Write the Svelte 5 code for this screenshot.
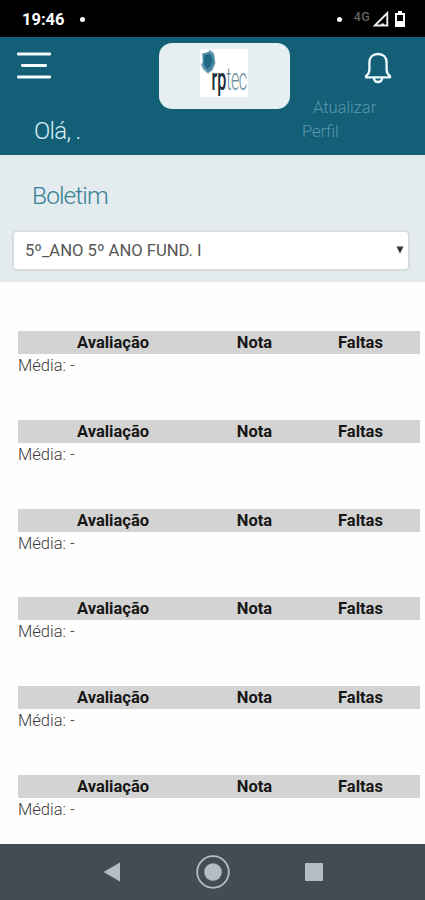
<script lang="ts">
  let turma = '5º_ANO 5º ANO FUND. I';

  const boletins = Array.from({ length: 6 }, (_, id) => ({ id, media: '-' }));
</script>

<div class="screen">
  <div class="status">
    <span class="time">19:46</span>
    <span class="dot"></span>
    <span class="dot right"></span>
    <span class="network">4G</span>
    <svg class="signal" width="16" height="16" viewBox="0 0 16 16">
      <path d="M1.8 14.500H14.300V2z" fill="none" stroke="#eee" stroke-width="1.9" />
      <path d="M8 15V12.500h3V15z" fill="#eee" />
    </svg>
    <svg width="10" height="16" viewBox="0 0 10 16">
      <path d="M3 0h4v2h3v14H0V2h3z" fill="#fff" />
      <path d="M2 4h6v6H2z" fill="#000" />
    </svg>
  </div>

  <header>
    <div class="left">
      <svg class="menu" width="34" height="28" viewBox="0 0 34 28">
        <path d="M1.3 2h31.4M5.3 13.5h23.4M1.3 25h31.4" fill="none" stroke="#f3fbfe" stroke-width="2.8" stroke-linecap="round" />
      </svg>
      <p class="greeting">Olá, .</p>
    </div>

    <div class="logo">
      <svg width="48" height="48" viewBox="0 0 48 48">
        <rect width="48" height="48" fill="#fff" />
        <path d="M2 4h6l2-3.500L14 4l1.500 10-3 7-4.500 4-4.500-4L.7 16 2.500 13z" fill="#86b0c1" />
        <path d="M3 5l6-2.500 4.500 3L15 14l-3 7-4 2.500L3 18z" fill="#4a8aa2" />
        <path d="M4.500 6.500L10 5l3 6-2.500 6.500L7 20l-3-5z" fill="#206783" />
        <text class="brand" transform="translate(11.500 40.500) scale(.52 1)"><tspan class="rp">rp</tspan><tspan class="tec">tec</tspan></text>
      </svg>
    </div>

    <div class="right-side">
      <svg class="bell" width="28" height="32" viewBox="0 0 28 32" fill="none" stroke="#edf9fd" stroke-width="2.300" stroke-linejoin="round">
        <path d="M14 2C8.500 2 5.400 5.500 5.400 10.500V17.500C5.400 20.500 4.200 22.500 2 24V25.400H26V24C23.800 22.500 22.600 20.500 22.600 17.500V10.500C22.600 5.500 19.500 2 14 2z" />
        <path d="M9.700 25.500c.4 3 2 4.500 4.300 4.500s3.900-1.500 4.300-4.500" />
      </svg>
      <a class="profile" href="#perfil">Atualizar Perfil</a>
    </div>
  </header>

  <section class="filter">
    <h1>Boletim</h1>
    <button class="select">
      <span>{turma}</span>
      <svg width="8" height="8" viewBox="0 0 8 8">
        <path d="M.5.5h7L4 7.600z" fill="#333" />
      </svg>
    </button>
  </section>

  <main>
    {#each boletins as boletim (boletim.id)}
      <div class="boletim">
        <div class="columns">
          <span>Avaliação</span>
          <span>Nota</span>
          <span>Faltas</span>
        </div>
        <p>Média: {boletim.media}</p>
      </div>
    {/each}
  </main>

  <nav>
    <svg width="18" height="20" viewBox="0 0 18 20">
      <path d="M.5 10L17 .5v19z" fill="#b4bec2" />
    </svg>
    <svg width="34" height="34" viewBox="0 0 34 34">
      <circle cx="17" cy="17" r="15.800" fill="none" stroke="#b4bec2" stroke-width="1.800" />
      <circle cx="17" cy="17" r="8.800" fill="#b4bec2" />
    </svg>
    <svg width="18" height="18" viewBox="0 0 18 18">
      <rect width="18" height="18" rx="1" fill="#b4bec2" />
    </svg>
  </nav>
</div>

<style>
  :global(body) {
    margin: 0;
  }

  .screen {
    width: 425px;
    height: 900px;
    display: flex;
    flex-direction: column;
    overflow: hidden;
    background: #fefefe;
    font-family: Roboto, sans-serif;
  }

  .screen * {
    box-sizing: border-box;
  }

  p,
  h1 {
    margin: 0;
    font-weight: 300;
  }

  .status {
    flex: none;
    height: 37px;
    display: flex;
    align-items: center;
    padding: 1px 20px 0 22px;
    background: #000;
    color: #fff;
  }

  .time {
    width: 58px;
    font-size: 16.5px;
    font-weight: 700;
  }

  .dot {
    width: 5px;
    height: 5px;
    border-radius: 50%;
    background: #fff;
  }

  .dot.right {
    margin-left: auto;
  }

  .network {
    margin: -5px 3px 0 12px;
    color: #626262;
    font-size: 12.5px;
    font-weight: 500;
    letter-spacing: 0.3px;
  }

  .signal {
    margin-right: 6px;
  }

  header {
    flex: none;
    height: 118px;
    display: grid;
    grid-template-columns: 159px 131px 1fr;
    background: #125f77;
  }

  .left {
    padding: 15px 0 0 17px;
  }

  .menu,
  .bell,
  .logo svg {
    display: block;
  }

  .logo svg {
    overflow: visible;
  }

  .brand {
    font-size: 31px;
  }

  .rp {
    fill: #172e38;
    font-weight: 500;
  }

  .tec {
    fill: #6f919e;
    font-weight: 300;
    letter-spacing: -1px;
  }

  .greeting {
    margin: 37px 0 0 17px;
    color: #d9edf3;
    font-size: 24px;
    line-height: 28px;
    letter-spacing: -0.7px;
  }

  .logo {
    height: 66px;
    margin-top: 6px;
    padding: 6px 0 0 41px;
    border-radius: 13px;
    background: #e7eef2;
  }

  .right-side {
    padding: 15px 0 0 12px;
  }

  .bell {
    margin-left: 62px;
  }

  .profile {
    display: block;
    width: 90px;
    margin-top: 12px;
    color: #5c96aa;
    font-size: 16.5px;
    font-weight: 300;
    line-height: 23.5px;
    text-decoration: none;
    text-indent: 11px;
  }

  .filter {
    flex: none;
    height: 127px;
    padding: 26px 15px 0 12px;
    background: #e3ebef;
  }

  h1 {
    margin-left: 20px;
    color: #377f94;
    font-size: 24.5px;
    line-height: 30px;
    letter-spacing: -0.9px;
  }

  .select {
    width: 100%;
    height: 41px;
    display: flex;
    align-items: center;
    justify-content: space-between;
    margin-top: 19px;
    padding: 0 4px 1px 11px;
    border: 2px solid #d6dcdf;
    border-radius: 5px;
    background: #fff;
    color: #555;
    font: 400 16.6px Roboto, sans-serif;
  }

  main {
    flex: 1;
    min-height: 0;
    padding: 49px 5px 0 18px;
    overflow: hidden;
  }

  .boletim {
    height: 88.8px;
  }

  .columns {
    height: 23px;
    display: grid;
    grid-template-columns: 190px 93px 119px;
    background: #d3d3d3;
    color: #161616;
    font-size: 16.5px;
    font-weight: 700;
    line-height: 23px;
    text-align: center;
  }

  .boletim p {
    color: #3c3c3c;
    font-size: 16.5px;
    line-height: 23px;
  }

  nav {
    flex: none;
    height: 56px;
    display: flex;
    align-items: center;
    justify-content: center;
    gap: 75px;
    background: #444c52;
  }
</style>
